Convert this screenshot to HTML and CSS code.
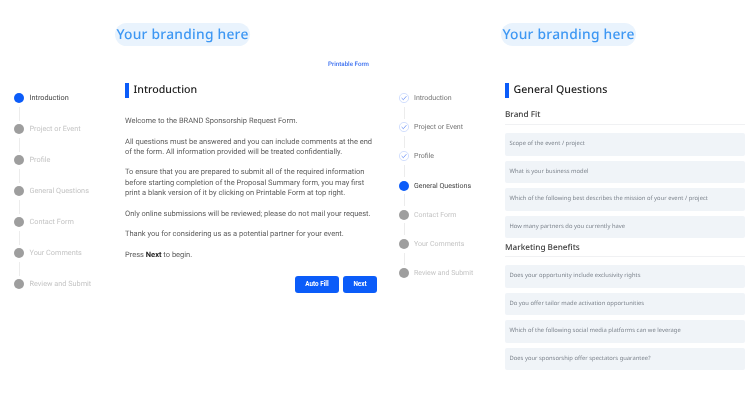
FILE: index.html
```html
<!DOCTYPE html>
<html lang="en">
<head>
<meta charset="utf-8">
<title>Sponsorship Request Form</title>
<link rel="stylesheet" href="styles.css">
</head>
<body>
<div class="page">
  <section class="panel panel-intro">
    <header class="brand-row"><div class="brand">Your branding here</div></header>
    <div class="print-row"><a class="print-link">Printable Form</a></div>
    <div class="columns">
      <ol class="steps">
        <li class="step current"><span class="dot"></span><span class="label">Introduction</span></li>
        <li class="link"></li>
        <li class="step"><span class="dot"></span><span class="label">Project or Event</span></li>
        <li class="link"></li>
        <li class="step"><span class="dot"></span><span class="label">Profile</span></li>
        <li class="link"></li>
        <li class="step"><span class="dot"></span><span class="label">General Questions</span></li>
        <li class="link"></li>
        <li class="step"><span class="dot"></span><span class="label">Contact Form</span></li>
        <li class="link"></li>
        <li class="step"><span class="dot"></span><span class="label">Your Comments</span></li>
        <li class="link"></li>
        <li class="step"><span class="dot"></span><span class="label">Review and Submit</span></li>
      </ol>
      <main class="content">
        <h1 class="title">Introduction</h1>
        <div class="copy">
          <p>Welcome to the BRAND Sponsorship Request Form.</p>
          <p>All questions must be answered and you can include comments at the end of the form. All information provided will be treated confidentially.</p>
          <p>To ensure that you are prepared to submit all of the required information before starting completion of the Proposal Summary form, you may first print a blank version of it by clicking on Printable Form at top right.</p>
          <p>Only online submissions will be reviewed; please do not mail your request.</p>
          <p>Thank you for considering us as a potential partner for your event.</p>
          <p>Press <b>Next</b> to begin.</p>
        </div>
        <div class="actions">
          <button class="btn btn-auto">Auto Fill</button>
          <button class="btn btn-next">Next</button>
        </div>
      </main>
    </div>
  </section>
  <section class="panel panel-questions">
    <header class="brand-row"><div class="brand">Your branding here</div></header>
    <div class="columns">
      <ol class="steps">
        <li class="step done"><svg class="check" viewBox="0 0 20 20"><circle cx="10" cy="10" r="9.2"/><path d="M5.8 10.6l2.9 2.8 5.6-6.4"/></svg><span class="label">Introduction</span></li>
        <li class="link"></li>
        <li class="step done"><svg class="check" viewBox="0 0 20 20"><circle cx="10" cy="10" r="9.2"/><path d="M5.8 10.6l2.9 2.8 5.6-6.4"/></svg><span class="label">Project or Event</span></li>
        <li class="link"></li>
        <li class="step done"><svg class="check" viewBox="0 0 20 20"><circle cx="10" cy="10" r="9.2"/><path d="M5.8 10.6l2.9 2.8 5.6-6.4"/></svg><span class="label">Profile</span></li>
        <li class="link"></li>
        <li class="step current"><span class="dot"></span><span class="label">General Questions</span></li>
        <li class="link"></li>
        <li class="step"><span class="dot"></span><span class="label">Contact Form</span></li>
        <li class="link"></li>
        <li class="step"><span class="dot"></span><span class="label">Your Comments</span></li>
        <li class="link"></li>
        <li class="step"><span class="dot"></span><span class="label">Review and Submit</span></li>
      </ol>
      <main class="content">
        <h1 class="title">General Questions</h1>
        <h2 class="group">Brand Fit</h2>
        <ul class="fields">
          <li class="field">Scope of the event / project</li>
          <li class="field">What is your business model</li>
          <li class="field">Which of the following best describes the mission of your event / project</li>
          <li class="field">How many partners do you currently have</li>
        </ul>
        <h2 class="group group-next">Marketing Benefits</h2>
        <ul class="fields">
          <li class="field">Does your opportunity include exclusivity rights</li>
          <li class="field">Do you offer tailor made activation opportunities</li>
          <li class="field">Which of the following social media platforms can we leverage</li>
          <li class="field">Does your sponsorship offer spectators guarantee?</li>
        </ul>
      </main>
    </div>
  </section>
</div>
</body>
</html>
```
FILE: styles.css
```css
* { box-sizing: border-box; }
html, body { margin: 0; padding: 0; background: #fff; }
body { width: 750px; height: 402px; overflow: hidden; font-family: Roboto, "Liberation Sans", sans-serif; text-rendering: geometricPrecision; }
.page { display: flex; align-items: flex-start; height: 402px; background: #fff; filter: blur(0.35px); }
.panel { flex: none; }
.panel-intro { width: 380px; padding-left: 14px; }
.panel-questions { width: 370px; padding-left: 19px; }

.brand-row { padding-top: 23px; }
.panel-intro .brand-row { padding-left: 101px; }
.panel-questions .brand-row { padding-left: 102px; }
.brand { display: flex; align-items: center; justify-content: center; width: 135px; height: 23px; border-radius: 12px; background: #e9f3fd; color: #3d97f3; font: 500 13.8px/23px "Noto Sans", sans-serif; letter-spacing: 0.25px; white-space: nowrap; }

.print-row { display: flex; justify-content: flex-end; height: 14px; margin-top: 11px; padding-right: 11px; }
.print-link { color: #3a6ff0; font-size: 6.2px; font-weight: 500; line-height: 14px; }
.panel-intro .columns { margin-top: 12px; }
.panel-questions .columns { margin-top: 37px; }

.columns { display: flex; align-items: flex-start; }
.steps { flex: none; list-style: none; margin: 0; padding: 10px 0 0; }
.panel-intro .steps { width: 111px; }
.panel-questions .steps { width: 106px; padding-top: 10px; }
.step { display: flex; align-items: center; height: 10px; }
.dot { flex: none; width: 10px; height: 10px; border-radius: 50%; background: #9e9e9e; }
.check { flex: none; width: 10px; height: 10px; fill: none; }
.check circle { stroke: #a9c1fb; stroke-width: 1; }
.check path { stroke: #3f72f2; stroke-width: 1.3; stroke-linecap: round; stroke-linejoin: round; }
.current .dot { background: #0b5cf9; }
.label { margin-left: 5.5px; color: #c4c4c4; font-size: 7.3px; line-height: 10px; white-space: nowrap; }
.current .label { color: #444; }
.done .label { color: #747474; }
.panel-questions .label { margin-left: 5px; font-size: 7px; }
.link { width: 1px; margin-left: 4.5px; background: #ececec; }
.panel-intro .link { height: 14px; margin-top: 3.5px; margin-bottom: 3.5px; }
.panel-questions .link { height: 12px; margin-top: 3.6px; margin-bottom: 3.6px; }

.content { flex: none; }
.panel-intro .content { width: 252px; }
.panel-questions .content { width: 240px; }
.title { margin: 0; padding-left: 4.5px; border-left: 4px solid #0b5cf9; color: #1e1e1e; font: 500 10.6px/15px "Noto Sans", sans-serif; }

.copy { margin-top: 18px; color: #5d5d5d; font-size: 7.5px; line-height: 10.3px; }
.copy p { margin: 0 0 10.3px; }
.copy b { color: #222; font-weight: 700; }

.actions { display: flex; justify-content: flex-end; gap: 4px; margin-top: 16px; }
.btn { height: 17px; padding: 0; border: 0; border-radius: 3px; background: #0b5cf9; color: #fff; font: 700 6.3px/17px Roboto, sans-serif; }
.btn-auto { width: 44px; }
.btn-next { width: 34px; }

.group { height: 15px; margin: 0; padding-bottom: 0; border-bottom: 1px solid #f0f1f3; color: #3a3a3a; font: 500 8.2px/11px "Noto Sans", sans-serif; }
.panel-questions .title + .group { margin-top: 11px; height: 16px; }
.group-next { margin-top: 4px; }
.fields { list-style: none; margin: 8px 0 0; padding: 0; }
.field { display: flex; align-items: center; height: 22.5px; margin-bottom: 5px; padding-left: 4.5px; border-radius: 2px; background: #f0f4f8; color: #7b828b; font: 5.8px/1 "Noto Sans", sans-serif; letter-spacing: 0.03px; }
.fields .field:last-child { margin-bottom: 0; }
```
